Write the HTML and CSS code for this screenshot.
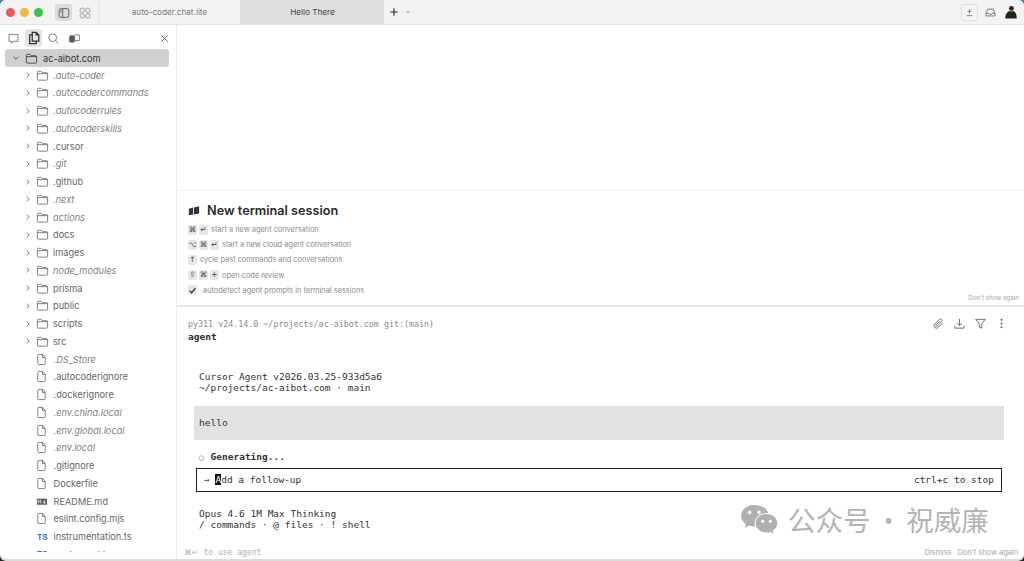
FILE: index.html
```html
<!DOCTYPE html>
<html lang="en">
<head>
<meta charset="utf-8">
<title>Hello There</title>
<link rel="stylesheet" href="styles.css">
</head>
<body>
<div class="window">
  <header class="titlebar">
    <div class="lights"><i class="light red"></i><i class="light yellow"></i><i class="light green"></i></div>
    <button class="tb-btn active"><svg viewBox="0 0 16 16" class="ic"><rect x="2.5" y="3" width="11" height="10" rx="2"/><path d="M6.5 3v10"/><path d="M3.5 5h2M3.5 7h2" stroke-width=".8"/></svg></button>
    <button class="tb-btn"><svg viewBox="0 0 16 16" class="ic light-ic"><rect x="2.5" y="2.5" width="4.6" height="4.6" rx="1"/><rect x="9" y="2.5" width="4.6" height="4.6" rx="1"/><rect x="2.5" y="9" width="4.6" height="4.6" rx="1"/><rect x="9" y="9" width="4.6" height="4.6" rx="1"/></svg></button>
    <div class="tab first">auto-coder.chat.lite</div>
    <div class="tab current">Hello There</div>
    <div class="new-tab">
      <svg viewBox="0 0 12 12" class="plus"><path d="M6 1.5v9M1.5 6h9"/></svg>
      <svg viewBox="0 0 8 8" class="mini"><path d="M2 3l2 2 2-2"/></svg>
    </div>
    <div class="tb-right">
      <span class="boxed"><svg viewBox="0 0 14 14" class="ic-s"><path d="M7 2.500v6M4.500 5.500h5M3.500 11h7"/></svg></span>
      <svg viewBox="0 0 16 16" class="ic inbox"><path d="M2.500 9l2-5.200h7l2 5.200v3.200h-11zM2.500 9H6l.8 1.200h2.400L10 9h3.500"/></svg>
      <svg viewBox="0 0 16 16" class="avatar"><circle cx="8.500" cy="4" r="2.800" fill="#2a2418"/><path d="M1.500 15.500c0-5.500 2.500-9 7-9s6 3.500 6 9z" fill="#17251b"/><rect x="7.300" y="5.800" width="2.400" height="2.500" fill="#8a6b4e"/></svg>
    </div>
  </header>

  <div class="body">
    <aside class="sidebar">
      <div class="side-tools">
        <svg viewBox="0 0 16 16" class="ic tool"><path d="M2.500 3h11v8.500H8l-2.500 2.300v-2.300h-3z" stroke-linejoin="round"/></svg>
        <span class="tool-on"><svg viewBox="0 0 16 16" class="ic dark"><path d="M6 1.500h4.500L13.500 4.500V11.500H6zM10.500 1.500v3h3" stroke-width="1.500"/><path d="M6 4.500H3v10h7.500v-3" stroke-width="1.500"/></svg></span>
        <svg viewBox="0 0 16 16" class="ic tool search"><circle cx="7" cy="7" r="4.800"/><path d="M10.500 10.500L14 14"/></svg>
        <svg viewBox="0 0 16 16" class="ic tool"><rect x="2" y="4.500" width="6" height="8" rx="1" fill="#5a5a5a"/><path d="M8 3.500h6v7H8" /></svg>
        <svg viewBox="0 0 12 12" class="close"><path d="M2.500 2.500l7 7M9.500 2.500l-7 7"/></svg>
      </div>
      <div class="tree">
        <div class="row root"><svg viewBox="0 0 10 10" class="chev"><path d="M2 3.500l3 3 3-3"/></svg><svg viewBox="0 0 14 14" class="ficon"><path d="M1.500 3.500a1 1 0 0 1 1-1h3l1.200 1.500h4.800a1 1 0 0 1 1 1v6a1 1 0 0 1-1 1h-9a1 1 0 0 1-1-1z"/><path d="M1.500 5h11"/></svg><span>ac-aibot.com</span></div>

        <div class="row dir dim"><svg viewBox="0 0 10 10" class="chev"><path d="M3.500 2l3 3-3 3"/></svg><svg viewBox="0 0 14 14" class="ficon"><path d="M1.500 3.500a1 1 0 0 1 1-1h3l1.200 1.500h4.800a1 1 0 0 1 1 1v6a1 1 0 0 1-1 1h-9a1 1 0 0 1-1-1z"/><path d="M1.500 5h11"/></svg><span>.auto-coder</span></div>
        <div class="row dir dim"><svg viewBox="0 0 10 10" class="chev"><path d="M3.500 2l3 3-3 3"/></svg><svg viewBox="0 0 14 14" class="ficon"><path d="M1.500 3.500a1 1 0 0 1 1-1h3l1.200 1.500h4.800a1 1 0 0 1 1 1v6a1 1 0 0 1-1 1h-9a1 1 0 0 1-1-1z"/><path d="M1.500 5h11"/></svg><span>.autocodercommands</span></div>
        <div class="row dir dim"><svg viewBox="0 0 10 10" class="chev"><path d="M3.500 2l3 3-3 3"/></svg><svg viewBox="0 0 14 14" class="ficon"><path d="M1.500 3.500a1 1 0 0 1 1-1h3l1.200 1.500h4.800a1 1 0 0 1 1 1v6a1 1 0 0 1-1 1h-9a1 1 0 0 1-1-1z"/><path d="M1.500 5h11"/></svg><span>.autocoderrules</span></div>
        <div class="row dir dim"><svg viewBox="0 0 10 10" class="chev"><path d="M3.500 2l3 3-3 3"/></svg><svg viewBox="0 0 14 14" class="ficon"><path d="M1.500 3.500a1 1 0 0 1 1-1h3l1.200 1.500h4.800a1 1 0 0 1 1 1v6a1 1 0 0 1-1 1h-9a1 1 0 0 1-1-1z"/><path d="M1.500 5h11"/></svg><span>.autocoderskills</span></div>
        <div class="row dir"><svg viewBox="0 0 10 10" class="chev"><path d="M3.500 2l3 3-3 3"/></svg><svg viewBox="0 0 14 14" class="ficon"><path d="M1.500 3.500a1 1 0 0 1 1-1h3l1.200 1.500h4.800a1 1 0 0 1 1 1v6a1 1 0 0 1-1 1h-9a1 1 0 0 1-1-1z"/><path d="M1.500 5h11"/></svg><span>.cursor</span></div>
        <div class="row dir dim"><svg viewBox="0 0 10 10" class="chev"><path d="M3.500 2l3 3-3 3"/></svg><svg viewBox="0 0 14 14" class="ficon"><path d="M1.500 3.500a1 1 0 0 1 1-1h3l1.200 1.500h4.800a1 1 0 0 1 1 1v6a1 1 0 0 1-1 1h-9a1 1 0 0 1-1-1z"/><path d="M1.500 5h11"/></svg><span>.git</span></div>
        <div class="row dir"><svg viewBox="0 0 10 10" class="chev"><path d="M3.500 2l3 3-3 3"/></svg><svg viewBox="0 0 14 14" class="ficon"><path d="M1.500 3.500a1 1 0 0 1 1-1h3l1.200 1.500h4.800a1 1 0 0 1 1 1v6a1 1 0 0 1-1 1h-9a1 1 0 0 1-1-1z"/><path d="M1.500 5h11"/></svg><span>.github</span></div>
        <div class="row dir dim"><svg viewBox="0 0 10 10" class="chev"><path d="M3.500 2l3 3-3 3"/></svg><svg viewBox="0 0 14 14" class="ficon"><path d="M1.500 3.500a1 1 0 0 1 1-1h3l1.200 1.500h4.800a1 1 0 0 1 1 1v6a1 1 0 0 1-1 1h-9a1 1 0 0 1-1-1z"/><path d="M1.500 5h11"/></svg><span>.next</span></div>
        <div class="row dir dim"><svg viewBox="0 0 10 10" class="chev"><path d="M3.500 2l3 3-3 3"/></svg><svg viewBox="0 0 14 14" class="ficon"><path d="M1.500 3.500a1 1 0 0 1 1-1h3l1.200 1.500h4.800a1 1 0 0 1 1 1v6a1 1 0 0 1-1 1h-9a1 1 0 0 1-1-1z"/><path d="M1.500 5h11"/></svg><span>actions</span></div>
        <div class="row dir"><svg viewBox="0 0 10 10" class="chev"><path d="M3.500 2l3 3-3 3"/></svg><svg viewBox="0 0 14 14" class="ficon"><path d="M1.500 3.500a1 1 0 0 1 1-1h3l1.200 1.500h4.800a1 1 0 0 1 1 1v6a1 1 0 0 1-1 1h-9a1 1 0 0 1-1-1z"/><path d="M1.500 5h11"/></svg><span>docs</span></div>
        <div class="row dir"><svg viewBox="0 0 10 10" class="chev"><path d="M3.500 2l3 3-3 3"/></svg><svg viewBox="0 0 14 14" class="ficon"><path d="M1.500 3.500a1 1 0 0 1 1-1h3l1.200 1.500h4.800a1 1 0 0 1 1 1v6a1 1 0 0 1-1 1h-9a1 1 0 0 1-1-1z"/><path d="M1.500 5h11"/></svg><span>images</span></div>
        <div class="row dir dim"><svg viewBox="0 0 10 10" class="chev"><path d="M3.500 2l3 3-3 3"/></svg><svg viewBox="0 0 14 14" class="ficon"><path d="M1.500 3.500a1 1 0 0 1 1-1h3l1.200 1.500h4.800a1 1 0 0 1 1 1v6a1 1 0 0 1-1 1h-9a1 1 0 0 1-1-1z"/><path d="M1.500 5h11"/></svg><span>node_modules</span></div>
        <div class="row dir"><svg viewBox="0 0 10 10" class="chev"><path d="M3.500 2l3 3-3 3"/></svg><svg viewBox="0 0 14 14" class="ficon"><path d="M1.500 3.500a1 1 0 0 1 1-1h3l1.200 1.500h4.800a1 1 0 0 1 1 1v6a1 1 0 0 1-1 1h-9a1 1 0 0 1-1-1z"/><path d="M1.500 5h11"/></svg><span>prisma</span></div>
        <div class="row dir"><svg viewBox="0 0 10 10" class="chev"><path d="M3.500 2l3 3-3 3"/></svg><svg viewBox="0 0 14 14" class="ficon"><path d="M1.500 3.500a1 1 0 0 1 1-1h3l1.200 1.500h4.800a1 1 0 0 1 1 1v6a1 1 0 0 1-1 1h-9a1 1 0 0 1-1-1z"/><path d="M1.500 5h11"/></svg><span>public</span></div>
        <div class="row dir"><svg viewBox="0 0 10 10" class="chev"><path d="M3.500 2l3 3-3 3"/></svg><svg viewBox="0 0 14 14" class="ficon"><path d="M1.500 3.500a1 1 0 0 1 1-1h3l1.200 1.500h4.800a1 1 0 0 1 1 1v6a1 1 0 0 1-1 1h-9a1 1 0 0 1-1-1z"/><path d="M1.500 5h11"/></svg><span>scripts</span></div>
        <div class="row dir"><svg viewBox="0 0 10 10" class="chev"><path d="M3.500 2l3 3-3 3"/></svg><svg viewBox="0 0 14 14" class="ficon"><path d="M1.500 3.500a1 1 0 0 1 1-1h3l1.200 1.500h4.800a1 1 0 0 1 1 1v6a1 1 0 0 1-1 1h-9a1 1 0 0 1-1-1z"/><path d="M1.500 5h11"/></svg><span>src</span></div>

        <div class="row file dim"><svg viewBox="0 0 14 14" class="ficon"><path d="M3 2.500a1 1 0 0 1 1-1h4.200L11 4.600v6.900a1 1 0 0 1-1 1H4a1 1 0 0 1-1-1z" stroke-linejoin="round"/><path d="M8 1.500v3.300h3"/></svg><span>.DS_Store</span></div>
        <div class="row file"><svg viewBox="0 0 14 14" class="ficon"><path d="M3 2.500a1 1 0 0 1 1-1h4.200L11 4.600v6.900a1 1 0 0 1-1 1H4a1 1 0 0 1-1-1z" stroke-linejoin="round"/><path d="M8 1.500v3.300h3"/></svg><span>.autocoderignore</span></div>
        <div class="row file"><svg viewBox="0 0 14 14" class="ficon"><path d="M3 2.500a1 1 0 0 1 1-1h4.200L11 4.600v6.900a1 1 0 0 1-1 1H4a1 1 0 0 1-1-1z" stroke-linejoin="round"/><path d="M8 1.500v3.300h3"/></svg><span>.dockerignore</span></div>
        <div class="row file dim"><svg viewBox="0 0 14 14" class="ficon"><path d="M3 2.500a1 1 0 0 1 1-1h4.200L11 4.600v6.900a1 1 0 0 1-1 1H4a1 1 0 0 1-1-1z" stroke-linejoin="round"/><path d="M8 1.500v3.300h3"/></svg><span>.env.china.local</span></div>
        <div class="row file dim"><svg viewBox="0 0 14 14" class="ficon"><path d="M3 2.500a1 1 0 0 1 1-1h4.200L11 4.600v6.900a1 1 0 0 1-1 1H4a1 1 0 0 1-1-1z" stroke-linejoin="round"/><path d="M8 1.500v3.300h3"/></svg><span>.env.global.local</span></div>
        <div class="row file dim"><svg viewBox="0 0 14 14" class="ficon"><path d="M3 2.500a1 1 0 0 1 1-1h4.200L11 4.600v6.900a1 1 0 0 1-1 1H4a1 1 0 0 1-1-1z" stroke-linejoin="round"/><path d="M8 1.500v3.300h3"/></svg><span>.env.local</span></div>
        <div class="row file"><svg viewBox="0 0 14 14" class="ficon"><path d="M3 2.500a1 1 0 0 1 1-1h4.200L11 4.600v6.900a1 1 0 0 1-1 1H4a1 1 0 0 1-1-1z" stroke-linejoin="round"/><path d="M8 1.500v3.300h3"/></svg><span>.gitignore</span></div>
        <div class="row file"><svg viewBox="0 0 14 14" class="ficon"><path d="M3 2.500a1 1 0 0 1 1-1h4.200L11 4.600v6.900a1 1 0 0 1-1 1H4a1 1 0 0 1-1-1z" stroke-linejoin="round"/><path d="M8 1.500v3.300h3"/></svg><span>Dockerfile</span></div>
        <div class="row file"><svg viewBox="0 0 14 14" class="ficon md"><rect x="2" y="4" width="11" height="6.500" fill="#5c5c5c" stroke="none"/><path d="M3.500 9V5.500l1.300 1.600 1.300-1.600V9M10 5.500V9M8.500 7.500L10 9l1.500-1.500" stroke="#fff" stroke-width=".8"/></svg><span>README.md</span></div>
        <div class="row file"><svg viewBox="0 0 14 14" class="ficon"><path d="M3 2.500a1 1 0 0 1 1-1h4.200L11 4.600v6.900a1 1 0 0 1-1 1H4a1 1 0 0 1-1-1z" stroke-linejoin="round"/><path d="M8 1.500v3.300h3"/></svg><span>eslint.config.mjs</span></div>
        <div class="row file"><b class="ts">TS</b><span>instrumentation.ts</span></div>
        <div class="row file"><b class="ts">TS</b><span>next-env.d.ts</span></div>
      </div>
    </aside>

    <main class="main">
      <div class="empty"></div>
      <section class="intro">
        <h1 class="intro-title"><svg viewBox="0 0 14 14" class="book"><path d="M1 4.500l5-1.500v8l-5 1zM7 3l6-1.500v8.500l-6 1z"/></svg>New terminal session</h1>
        <ul class="hints">
          <li><kbd>⌘</kbd><kbd>↵</kbd><span>start a new agent conversation</span></li>
          <li><kbd>⌥</kbd><kbd>⌘</kbd><kbd>↵</kbd><span>start a new cloud agent conversation</span></li>
          <li><kbd>↑</kbd><span>cycle past commands and conversations</span></li>
          <li><kbd>⇧</kbd><kbd>⌘</kbd><kbd>+</kbd><span>open code review</span></li>
          <li class="check-row"><kbd class="check"><svg viewBox="0 0 10 10" class="tick"><path d="M1.800 5.200l2.200 2.300 4.200-5"/></svg></kbd><span>autodetect agent prompts in terminal sessions</span></li>
        </ul>
        <div class="dont">Don't show again</div>
      </section>

      <section class="term">
        <div class="term-head">
          <div class="prompt">py311 v24.14.0 ~/projects/ac-aibot.com git:(main)</div>
          <div class="term-tools">
            <svg viewBox="0 0 14 14" class="tt"><path d="M11.500 6.500l-4.800 4.800a2.600 2.600 0 0 1-3.700-3.700l5-5a1.700 1.700 0 0 1 2.400 2.400l-4.800 4.800a.8.8 0 0 1-1.200-1.200l4.200-4.200"/></svg>
            <svg viewBox="0 0 14 14" class="tt"><path d="M7 2v7M4.300 6.500L7 9.200l2.700-2.700M2 9.500v2.500h10V9.500"/></svg>
            <svg viewBox="0 0 14 14" class="tt"><path d="M1.800 2.500h10.400L8.300 7.500v4.500l-2.600-1V7.500z" stroke-linejoin="round"/></svg>
            <svg viewBox="0 0 14 14" class="tt dots"><circle cx="7" cy="3" r="1"/><circle cx="7" cy="7" r="1"/><circle cx="7" cy="11" r="1"/></svg>
          </div>
        </div>
        <div class="cmd">agent</div>
        <div class="banner">
          <div>Cursor Agent v2026.03.25-933d5a6</div>
          <div>~/projects/ac-aibot.com · main</div>
        </div>
        <div class="msg">hello</div>
        <div class="gen"><span class="gen-dot">○</span> <b>Generating...</b></div>
        <div class="inputbox">
          <span><span class="arrow">→</span> <span class="cursor">A</span>dd a follow-up</span>
          <span>ctrl+c to stop</span>
        </div>
        <div class="meta">
          <div>Opus 4.6 1M Max Thinking</div>
          <div>/ commands · @ files · ! shell</div>
        </div>
        <footer class="term-foot">
          <span class="use"><span class="use-k">⌘↵</span> to use agent</span>
          <span class="foot-links"><span>Dismiss</span><span>Don't show again</span></span>
        </footer>
        <div class="watermark">
          <svg viewBox="0 0 40 34" class="wechat"><path d="M15 2C7.300 2 1 7.200 1 13.600c0 3.600 2 6.800 5.200 9L5 26.500l4.500-2.400c1.600.5 3.300.8 5 .8h1.300a10 10 0 0 1-.4-3c0-6.300 6-11.400 13.500-11.400h.8C28.300 5.500 22.200 2 15 2z" fill="#b0b0b0"/><path d="M39.500 21.500c0-5.500-5.300-9.800-11.500-9.800s-11.500 4.300-11.500 9.800S21.800 31.300 28 31.300c1.400 0 2.800-.2 4-.6l3.700 2-1-3.300c2.900-1.900 4.800-4.700 4.800-7.900z" fill="#b0b0b0"/><circle cx="10" cy="10" r="1.900" fill="#fff"/><circle cx="20" cy="10" r="1.900" fill="#fff"/><circle cx="24" cy="19.500" r="1.600" fill="#fff"/><circle cx="32" cy="19.500" r="1.600" fill="#fff"/></svg>
          <span>公众号 · 祝威廉</span>
        </div>
      </section>
    </main>
  </div>
</div>
</body>
</html>
```
FILE: styles.css
```css
* { box-sizing: border-box; }
html, body { margin: 0; padding: 0; height: 100%; overflow: hidden; }
html { background: linear-gradient(#4a7db5 0 50%, #1d2a20 50%); }
body { font-family: Inter, "Liberation Sans", sans-serif; color: #333; }
.window { width: 1024px; height: 561px; display: flex; flex-direction: column; overflow: hidden; border-bottom: 2px solid #dcdcdc; border-radius: 6px; background: #fff; }

svg { display: block; fill: none; stroke: currentColor; stroke-width: 1; }

.titlebar { height: 25px; flex: none; background: #f3f3f3; border-bottom: 1px solid #e2e2e2; display: flex; align-items: stretch; }
.lights { display: flex; align-items: center; gap: 5px; padding-left: 6px; width: 55px; }
.light { width: 9px; height: 9px; border-radius: 50%; display: block; }
.red { background: #ee5a52; }
.yellow { background: #f5b73d; }
.green { background: #3cc24c; }
.tb-btn { width: 17px; height: 17px; margin-top: 4px; margin-right: 4px; border: 0; padding: 0; background: none; border-radius: 3px; display: flex; align-items: center; justify-content: center; color: #555; }
.tb-btn.active { background: #dcdcdc; }
.ic { width: 14px; height: 14px; }
.light-ic { color: #9a9a9a; }
.tab { width: 143px; display: flex; align-items: center; justify-content: center; font-size: 8.200px; color: #777; }
.tab.first { margin-left: 1px; border-left: 1px solid #e6e6e6; border-right: 1px solid #e2e2e2; }
.tab.current { background: #dedede; color: #444; }
.new-tab { display: flex; align-items: center; gap: 6px; padding-left: 5px; color: #222; }
.plus { width: 10px; height: 10px; stroke-width: 1.300; }
.mini { width: 6px; height: 6px; color: #666; }
.tb-right { margin-left: auto; display: flex; align-items: center; padding-right: 6px; color: #666; }
.boxed { width: 17px; height: 17px; border: 1px solid #dedede; border-radius: 3px; display: flex; align-items: center; justify-content: center; margin-right: 6px; }
.ic-s { width: 11px; height: 11px; }
.inbox { width: 13px; height: 13px; margin-right: 7px; }
.avatar { width: 14px; height: 16px; stroke: none; }

.body { flex: 1; display: flex; min-height: 0; }
.sidebar { width: 177px; flex: none; border-right: 1px solid #ececec; overflow: hidden; padding: 2px 0 0 5px; }
.side-tools { height: 22px; display: flex; align-items: center; gap: 2px; color: #666; padding: 0 6px 0 2px; }
.tool { width: 13px; height: 13px; margin-right: 3px; }
.search { margin-right: 6px; }
.tool-on { width: 17px; height: 18px; background: #e4e4e4; border-radius: 3px; display: flex; align-items: center; justify-content: center; margin-right: 3px; }
.dark { color: #333; }
.close { width: 11px; height: 11px; margin-left: auto; color: #555; }

.tree { height: 503px; overflow: hidden; }
.row { height: 17.750px; display: flex; align-items: center; font-size: 9.200px; color: #666; white-space: nowrap; }
.row span { display: block; }
.root { width: 164px; height: 18px; background: #d0d0d0; border-radius: 3px; color: #333; padding-left: 7px; margin-bottom: -0.750px; }
.root .chev { margin-right: 5px; color: #333; }
.root .ficon { margin-right: 5px; color: #444; }
.dir { padding-left: 19px; }
.chev { width: 8px; height: 8px; color: #555; margin-right: 4px; flex: none; }
.ficon { width: 13px; height: 13px; color: #777; margin-right: 4px; flex: none; }
.file { padding-left: 30px; }
.file .ficon { margin-right: 5.500px; }
.dim span { font-style: italic; color: #808080; }
.ts { width: 11px; margin: 0 5.500px 0 2px; font-size: 8px; font-weight: 700; color: #2f7cb8; flex: none; }
.md { color: #555; }

.main { flex: 1; min-width: 0; display: flex; flex-direction: column; }
.empty { height: 166px; flex: none; border-bottom: 1px solid #f2f2f2; }
.intro { height: 116px; flex: none; border-bottom: 2px solid #e6e6e6; padding: 12px 11px 0; position: relative; }
.intro-title { margin: 0 0 3px; font-size: 12.700px; line-height: 16px; font-weight: 600; color: #2a2a2a; display: flex; align-items: center; gap: 7px; }
.book { width: 12px; height: 12px; fill: #333; stroke: none; }
.hints { list-style: none; margin: 0; padding: 0; display: flex; flex-direction: column; }
.hints li { height: 15.200px; display: flex; align-items: center; gap: 2px; font-size: 7.400px; color: #8a8a8a; }
.hints span { margin-left: 1px; }
kbd { font-family: "DejaVu Sans", sans-serif; width: 9px; height: 10px; font-size: 7.500px; line-height: 10px; background: #e6e6e6; border-radius: 2px; text-align: center; color: #444; display: block; }
.hints .check-row span { margin-left: 4px; }
.check { display: flex; align-items: center; justify-content: center; }
.tick { width: 9px; height: 9px; color: #333; stroke-width: 1.400; }
.dont { position: absolute; right: 5px; bottom: 4px; font-size: 6.200px; color: #a5a5a5; }

.term { flex: 1; min-height: 0; position: relative; font-family: "DejaVu Sans Mono", "Liberation Mono", monospace; font-size: 9.500px; line-height: 11.500px; color: #333; padding: 0 20px 0 11px; display: flex; flex-direction: column; }
.term-head { display: flex; justify-content: space-between; align-items: center; height: 20px; margin-top: 8px; }
.prompt { font-size: 8.360px; color: #8a8a8a; }
.term-tools { display: flex; gap: 8px; color: #666; align-items: center; margin-right: -4px; margin-top: -3px; }
.tt { width: 13px; height: 13px; }
.dots { fill: #555; stroke: none; }
.cmd { font-weight: 700; margin-top: -4px; color: #2a2a2a; }
.banner { margin: 28px 0 0 11px; }
.msg { margin: 12px 0 0 6px; height: 34px; background: #e2e2e2; display: flex; align-items: center; padding: 1px 0 0 5px; }
.gen { margin: 11.500px 0 0 11px; height: 11.500px; }
.gen b { font-weight: 700; margin-left: 1px; }
.gen-dot { color: #666; font-size: 8px; }
.inputbox { margin: 5px 2px 0 8px; height: 24px; border: 1px solid #222; display: flex; align-items: center; justify-content: space-between; padding: 0 7px; color: #333; flex: none; }
.arrow { color: #555; }
.cursor { background: #111; color: #fff; }
.meta { margin: 16px 0 0 11px; }
.term-foot { margin: auto -14px -1px -4px; height: 14px; display: flex; justify-content: space-between; align-items: center; color: #b0b0b0; }
.use { font-size: 8px; }
.use-k { font-family: "DejaVu Sans", sans-serif; }
.foot-links { font-family: Inter, "Liberation Sans", sans-serif; display: flex; gap: 6px; font-size: 7.400px; color: #a5a5a5; }
.watermark { position: absolute; left: 563px; top: 195px; display: flex; align-items: center; gap: 10px; color: #b4b4b4; font-family: "Noto Sans CJK SC", sans-serif; font-size: 27.500px; line-height: 34px; word-spacing: -2px; white-space: nowrap; }
.wechat { width: 38px; height: 32px; stroke: none; }
```
